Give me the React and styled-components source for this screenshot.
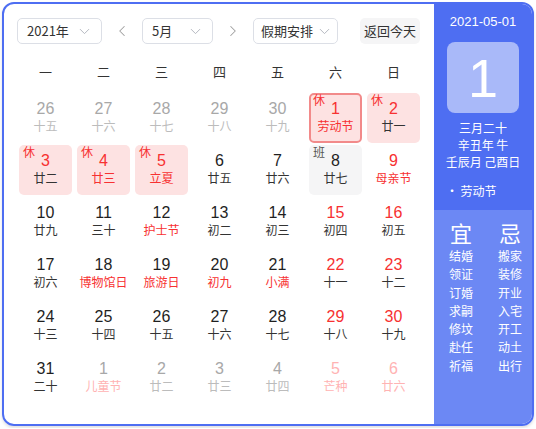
import React from 'react'
import styled, { createGlobalStyle } from 'styled-components'
import { ChevronDown, ChevronLeft, ChevronRight } from 'lucide-react'

const GlobalStyle = createGlobalStyle`
  body {
    margin: 0;
    background: #fff;
    font-family: Arial, "Liberation Sans", "Noto Sans CJK SC", sans-serif;
  }
`

const colors = {
  blue: '#4e6ef2',
  blueLight: '#6c88f4',
  red: '#f73131',
  redLight: '#ffb3b3',
  grey: '#a8a8a8',
  greyLight: '#bcbcbc',
  dark: '#1f1f1f',
  text: '#333',
}

const weekdays = ['一', '二', '三', '四', '五', '六', '日']

// t: other month, w: red number, f: red lunar, b: badge, h: holiday bg, s: selected
const days = [
  { d: 26, l: '十五', t: 1 }, { d: 27, l: '十六', t: 1 }, { d: 28, l: '十七', t: 1 },
  { d: 29, l: '十八', t: 1 }, { d: 30, l: '十九', t: 1 },
  { d: 1, l: '劳动节', w: 1, f: 1, b: '休', h: 1, s: 1 }, { d: 2, l: '廿一', w: 1, b: '休', h: 1 },
  { d: 3, l: '廿二', w: 1, b: '休', h: 1 }, { d: 4, l: '廿三', w: 1, f: 1, b: '休', h: 1 },
  { d: 5, l: '立夏', w: 1, f: 1, b: '休', h: 1 }, { d: 6, l: '廿五' }, { d: 7, l: '廿六' },
  { d: 8, l: '廿七', b: '班', work: 1 }, { d: 9, l: '母亲节', w: 1, f: 1 },
  { d: 10, l: '廿九' }, { d: 11, l: '三十' }, { d: 12, l: '护士节', f: 1 }, { d: 13, l: '初二' },
  { d: 14, l: '初三' }, { d: 15, l: '初四', w: 1 }, { d: 16, l: '初五', w: 1 },
  { d: 17, l: '初六' }, { d: 18, l: '博物馆日', f: 1 }, { d: 19, l: '旅游日', f: 1 },
  { d: 20, l: '初九', f: 1 }, { d: 21, l: '小满', f: 1 }, { d: 22, l: '十一', w: 1 },
  { d: 23, l: '十二', w: 1 },
  { d: 24, l: '十三' }, { d: 25, l: '十四' }, { d: 26, l: '十五' }, { d: 27, l: '十六' },
  { d: 28, l: '十七' }, { d: 29, l: '十八', w: 1 }, { d: 30, l: '十九', w: 1 },
  { d: 31, l: '二十' }, { d: 1, l: '儿童节', t: 1, f: 1 }, { d: 2, l: '廿二', t: 1 },
  { d: 3, l: '廿三', t: 1 }, { d: 4, l: '廿四', t: 1 }, { d: 5, l: '芒种', t: 1, w: 1, f: 1 },
  { d: 6, l: '廿六', t: 1, w: 1, f: 1 },
]

const yi = ['结婚', '领证', '订婚', '求嗣', '修坟', '赴任', '祈福']
const ji = ['搬家', '装修', '开业', '入宅', '开工', '动土', '出行']

export default function App() {
  return (
    <>
      <GlobalStyle />
      <Card>
        <Main>
          <Toolbar>
            <Select width={85}>
              <span>2021年</span>
              <ChevronDown size={17} strokeWidth={1.4} color="#b4b8c0" />
            </Select>
            <Arrow><ChevronLeft size={18} strokeWidth={1.4} /></Arrow>
            <Select width={71}>
              <span>5月</span>
              <ChevronDown size={17} strokeWidth={1.4} color="#b4b8c0" />
            </Select>
            <Arrow><ChevronRight size={18} strokeWidth={1.4} /></Arrow>
            <Select width={85} tight>
              <span>假期安排</span>
              <ChevronDown size={17} strokeWidth={1.4} color="#b4b8c0" />
            </Select>
            <TodayButton>返回今天</TodayButton>
          </Toolbar>
          <Grid>
            {weekdays.map(w => <Weekday key={w}>{w}</Weekday>)}
            {days.map((c, i) => (
              <Cell key={i} $holiday={c.h} $selected={c.s} $work={c.work}>
                {c.b && <Badge $work={c.work}>{c.b}</Badge>}
                <Num $other={c.t} $red={c.w}>{c.d}</Num>
                <Lunar $other={c.t} $red={c.f}>{c.l}</Lunar>
              </Cell>
            ))}
          </Grid>
        </Main>
        <Side>
          <SideTop>
            <DateText>2021-05-01</DateText>
            <BigDay>1</BigDay>
            <LunarInfo>
              <div>三月二十</div>
              <div>辛丑年 牛</div>
              <div>壬辰月 己酉日</div>
            </LunarInfo>
            <Festival>·&#8201;劳动节</Festival>
          </SideTop>
          <SideBottom>
            <AdviceCol>
              <AdviceHead>宜</AdviceHead>
              {yi.map(x => <AdviceItem key={x}>{x}</AdviceItem>)}
            </AdviceCol>
            <AdviceCol>
              <AdviceHead>忌</AdviceHead>
              {ji.map(x => <AdviceItem key={x}>{x}</AdviceItem>)}
            </AdviceCol>
          </SideBottom>
        </Side>
      </Card>
    </>
  )
}

const Card = styled.div`
  margin: 2px;
  width: 528px;
  height: 420px;
  border: 2px solid ${colors.blue};
  border-radius: 12px;
  overflow: hidden;
  display: flex;
  box-shadow: 0 2px 3px rgba(0, 0, 0, 0.12);
  font-family: Arial, "Liberation Sans", "Noto Sans CJK SC", sans-serif;
`

const Main = styled.div`
  width: 430px;
  flex-shrink: 0;
  padding: 14px 14px 0 15px;
  box-sizing: border-box;
`

const Toolbar = styled.div`
  display: flex;
  align-items: center;
  height: 26px;
  margin-left: -2px;
  white-space: nowrap;
`

const Select = styled.div`
  flex-shrink: 0;
  width: ${p => p.width}px;
  height: 26px;
  box-sizing: border-box;
  border: 1px solid #dcdfe6;
  border-radius: 5px;
  display: flex;
  align-items: center;
  justify-content: space-between;
  padding: 0 ${p => (p.tight ? 4 : 8)}px 0 ${p => (p.tight ? 7 : 9)}px;
  font-size: 13px;
  color: ${colors.text};
  span {
    font-family: "Noto Sans CJK SC", sans-serif;
    line-height: 18px;
  }
`

const Arrow = styled.div`
  flex-shrink: 0;
  width: 40px;
  display: flex;
  justify-content: center;
  color: #a0a0a0;
`

const TodayButton = styled.div`
  flex-shrink: 0;
  margin-left: 22px;
  width: 60px;
  height: 26px;
  box-sizing: border-box;
  border-radius: 5px;
  background: #f5f5f6;
  display: flex;
  align-items: center;
  justify-content: center;
  font-size: 13px;
  line-height: 18px;
  color: ${colors.text};
  font-family: "Noto Sans CJK SC", sans-serif;
`

const Grid = styled.div`
  margin-top: 7px;
  display: grid;
  grid-template-columns: repeat(7, 53px);
  grid-auto-rows: 50px;
  grid-template-rows: 40px;
  column-gap: 5px;
  row-gap: 2px;
`

const Weekday = styled.div`
  display: flex;
  align-items: center;
  justify-content: center;
  font-size: 13px;
  color: ${colors.text};
  font-family: "Noto Sans CJK SC", sans-serif;
`

const Cell = styled.div`
  position: relative;
  box-sizing: border-box;
  border-radius: 5px;
  display: flex;
  flex-direction: column;
  align-items: center;
  justify-content: center;
  padding-bottom: 3px;
  background: ${p => (p.$holiday ? '#fde2e2' : p.$work ? '#f5f5f6' : 'transparent')};
  border: 2px solid ${p => (p.$selected ? '#f28a8a' : 'transparent')};
`

const Badge = styled.span`
  position: absolute;
  top: -2px;
  left: 2px;
  font-size: 12px;
  line-height: 14px;
  color: ${p => (p.$work ? '#555' : colors.red)};
  font-family: "Noto Sans CJK SC", sans-serif;
`

const Num = styled.div`
  font-size: 16px;
  line-height: 19px;
  color: ${p =>
    p.$other ? (p.$red ? colors.redLight : colors.grey) : p.$red ? colors.red : colors.dark};
`

const Lunar = styled.div`
  font-size: 12px;
  line-height: 16px;
  white-space: nowrap;
  font-family: "Noto Sans CJK SC", sans-serif;
  color: ${p =>
    p.$other ? (p.$red ? colors.redLight : colors.greyLight) : p.$red ? colors.red : colors.text};
`

const Side = styled.div`
  flex: 1;
  display: flex;
  flex-direction: column;
  color: #fff;
  font-family: "Noto Sans CJK SC", sans-serif;
`

const SideTop = styled.div`
  background: ${colors.blue};
  height: 206px;
  display: flex;
  flex-direction: column;
  align-items: center;
  padding-top: 9px;
  box-sizing: border-box;
`

const DateText = styled.div`
  font-family: Arial, "Liberation Sans", sans-serif;
  font-size: 13px;
  line-height: 18px;
`

const BigDay = styled.div`
  margin-top: 11px;
  width: 72px;
  height: 71px;
  border-radius: 8px;
  background: #a9b9f9;
  display: flex;
  align-items: center;
  justify-content: center;
  font-family: Arial, "Liberation Sans", sans-serif;
  font-size: 54px;
  line-height: 1;
`

const LunarInfo = styled.div`
  margin-top: 6px;
  text-align: center;
  font-size: 12px;
  line-height: 17px;
`

const Festival = styled.div`
  align-self: flex-start;
  margin: 12px 0 0 12px;
  font-size: 12px;
  line-height: 17px;
`

const SideBottom = styled.div`
  flex: 1;
  background: ${colors.blueLight};
  display: flex;
  justify-content: center;
  gap: 25px;
  padding: 8px 0 0 5px;
`

const AdviceCol = styled.div`
  display: flex;
  flex-direction: column;
  align-items: center;
`

const AdviceHead = styled.div`
  font-size: 22px;
  line-height: 28px;
  margin-bottom: 1px;
`

const AdviceItem = styled.div`
  font-size: 12px;
  line-height: 18.3px;
`
